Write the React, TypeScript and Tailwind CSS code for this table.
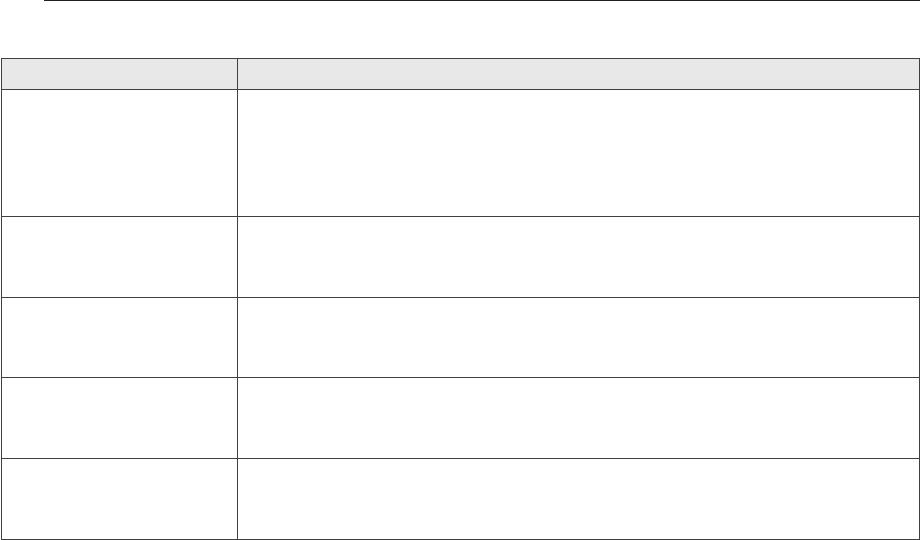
import React from "react";

const rows = [127, 81, 80, 81, 81];

export default function App() {
  return (
    <div className="w-[920px] h-[540px] bg-white overflow-hidden" style={{ fontFamily: "'Liberation Sans', sans-serif" }}>
      <div className="ml-[44px] h-px bg-[#231f20]" />
      <div className="mt-[57px] ml-px w-[919px] border-l border-t border-[#404040]">
        <div className="flex h-[31px] bg-[#e8e8e8]">
          <div className="w-[236px] border-r border-b border-[#404040]" />
          <div className="flex-1 border-r border-b border-[#404040]" />
        </div>
        {rows.map((h, i) => (
          <div key={i} className="flex" style={{ height: h }}>
            <div className="w-[236px] border-r border-b border-[#404040]" />
            <div className="flex-1 border-r border-b border-[#404040]" />
          </div>
        ))}
      </div>
    </div>
  );
}
